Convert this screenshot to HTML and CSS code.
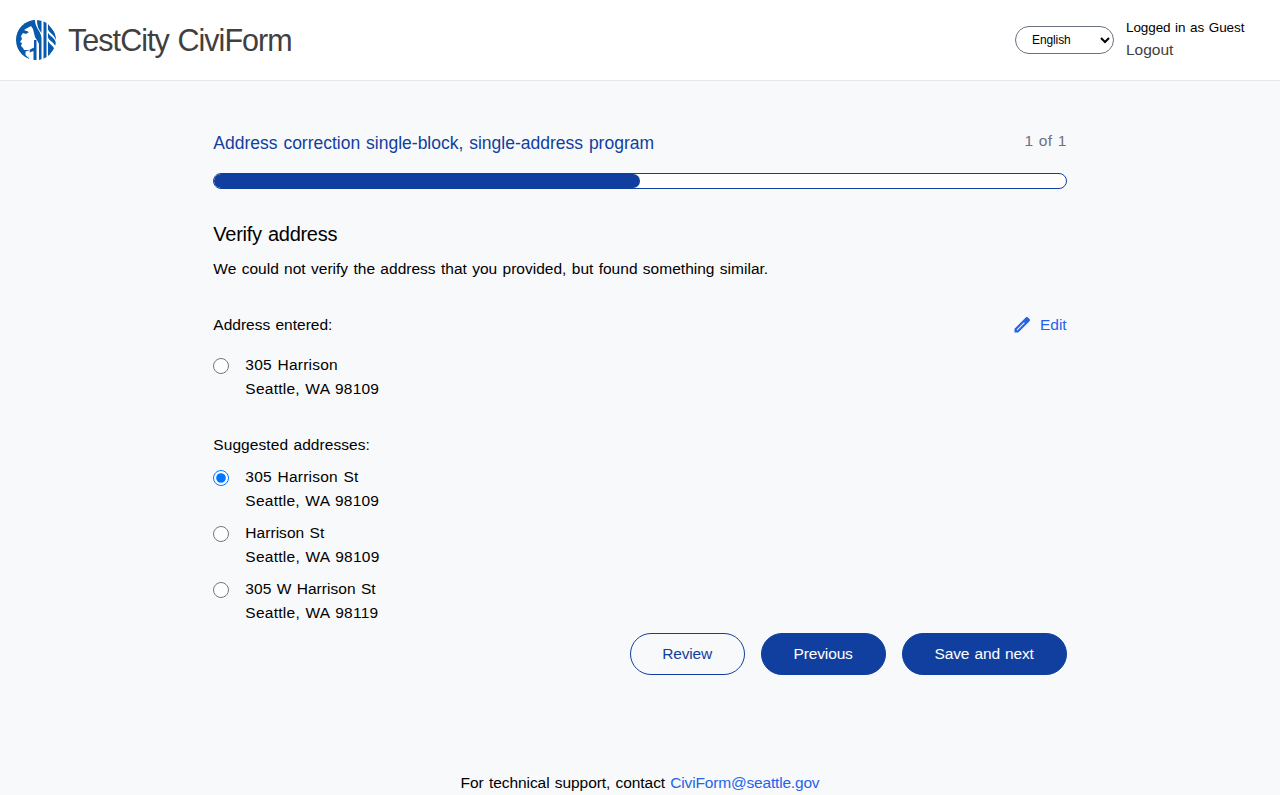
FILE: index.html
```html
<!DOCTYPE html>
<html lang="en">
<head>
<meta charset="utf-8">
<title>Verify address</title>
<link rel="stylesheet" href="styles.css">
</head>
<body>
<header class="header">
  <div class="brand">
    <svg class="logo" viewBox="0 0 40 40" aria-hidden="true">
      <defs><clipPath id="disc"><circle cx="20" cy="20" r="20"/></clipPath></defs>
      <g clip-path="url(#disc)">
        <path fill="#0659ab" d="M0 0H19V4C15 5 12 8 8 10L13 12L10 14L7 13L5 16L6 19L4 22L6 23L5 26L7 28L8 30L13 30L18 27.5L19 28V40H17.5V31L12 33L13 39L8 40H0Z"/>
        <path fill="#fff" d="M9.5 31.5L14 30L12.5 38L9.5 35Z"/>
        <path fill="#0659ab" d="M14 0H19C19 8 25 11 25.5 18V40H23V24C22 20 19 19 18.5 15L17 9L15 6L10 8ZM21 0H25.5V13C22 9 21 5 21 0ZM27.5 1H30.5V40H27.5ZM18 20H20.5V40H18ZM32 3C33 7 39 10 40 17V20C38 14 32 12 32 9ZM32 13C34 16 39 18 40 23V27C37 21 32 20 32 17ZM32 21C34 25 38 26 38 29L32 37Z"/>
      </g>
    </svg>
    <span class="brand-name">TestCity CiviForm</span>
  </div>
  <div class="account">
    <select class="language" aria-label="Language"><option>English</option></select>
    <div class="session"><div class="guest">Logged in as Guest</div><a class="logout">Logout</a></div>
  </div>
</header>
<main class="main">
  <div class="program"><h2 class="program-name">Address correction single-block, single-address program</h2><span class="step">1 of 1</span></div>
  <div class="progress"><div class="progress-fill"></div></div>
  <h1 class="title">Verify address</h1>
  <p class="intro">We could not verify the address that you provided, but found something similar.</p>
  <div class="entered"><span>Address entered:</span>
    <a class="edit"><svg class="pencil" viewBox="0 0 24 24" aria-hidden="true"><path fill="currentColor" d="M3 16.5V21h4.5L21 7.5c.8-.8.8-1.8 0-2.6L19.1 3c-.8-.8-1.8-.8-2.6 0L3 16.5zM5.8 18.3v-.8l8.7-8.7 .8.8-8.7 8.7z"/></svg>Edit</a></div>
  <label class="option"><input class="radio" type="radio" name="address"><span>305 Harrison<br>Seattle, WA 98109</span></label>
  <div class="suggested">Suggested addresses:</div>
  <label class="option"><input class="radio" type="radio" name="address" checked><span>305 Harrison St<br>Seattle, WA 98109</span></label>
  <label class="option"><input class="radio" type="radio" name="address"><span class="tight">Harrison St<br><span class="city">Seattle, WA 98109</span></span></label>
  <label class="option"><input class="radio" type="radio" name="address"><span class="tight">305 W Harrison St<br><span class="city">Seattle, WA 98119</span></span></label>
  <div class="actions"><button class="button review">Review</button><button class="button previous">Previous</button><button class="button save">Save and next</button></div>
</main>
<footer class="footer">For technical support, contact <a class="link">CiviForm@seattle.gov</a></footer>
</body>
</html>
```
FILE: styles.css
```css
*{box-sizing:border-box}
body{margin:0;height:795px;overflow:hidden;background:#f8f9fb;color:#000;font:15.5px/24px "Liberation Sans",sans-serif;word-spacing:1px}
.header{height:81px;padding:0 36px 0 16px;background:#fff;border-bottom:1px solid #e5e7eb;display:flex;justify-content:space-between;align-items:center}
.brand{display:flex;align-items:center;gap:12px}
.logo{width:40px;height:40px}
.brand-name{font-size:30.5px;line-height:36px;color:#404040;white-space:nowrap;letter-spacing:-.95px}
.account{display:flex;align-items:center;gap:12px;white-space:nowrap}
.session{width:118px}
.language{width:99px;height:28px;border:1px solid #6b7280;border-radius:14px;background:#fff;color:#000;padding:0 0 0 12px;font:12px "Liberation Sans",sans-serif;letter-spacing:-.1px}
.guest{font-size:13.5px;line-height:20px;letter-spacing:-.1px}
.logout{display:block;color:#404040}
.main{width:853.33px;margin:0 auto;padding-top:48px}
.program{display:flex;justify-content:space-between;height:44px}
.program-name{margin:0;color:#113f9f;font-size:17.5px;line-height:28px;font-weight:400;white-space:nowrap}
.step{color:#6b7280;letter-spacing:.25px}
.progress{height:16px;border:1px solid #113f9f;border-radius:8px;background:#fff}
.progress-fill{height:14px;width:50%;background:#113f9f;border-radius:7px}
.title{margin:31px 0 0;font-size:20px;line-height:28px;font-weight:400;letter-spacing:-.28px}
.intro{margin:9px 0 0;letter-spacing:.015px}
.entered{margin-top:32px;display:flex;justify-content:space-between;height:32px;margin-bottom:8px}
.edit{display:flex;color:#2563eb;gap:8px;height:24px;align-items:center}
.pencil{width:20px;height:20px}
.option{display:flex;gap:16px;margin-bottom:8px;letter-spacing:.24px}
.tight{letter-spacing:.04px}
.city{letter-spacing:.26px}
.radio{width:16px;height:16px;margin:5px 0 0}
.suggested{margin:32px 0 8px;letter-spacing:.07px}
.actions{display:flex;justify-content:flex-end;gap:16px}
.button{height:42px;padding:0;border:1px solid #113f9f;border-radius:21px;font:inherit;word-spacing:1px;letter-spacing:-.15px;color:#fff;background:#113f9f}
.review{width:115px;color:#113f9f;background:transparent}
.previous{width:125px}
.save{width:165px}
.footer{text-align:center;margin-top:96px;letter-spacing:-.06px}
.link{color:#2563eb;letter-spacing:-.18px}
```
